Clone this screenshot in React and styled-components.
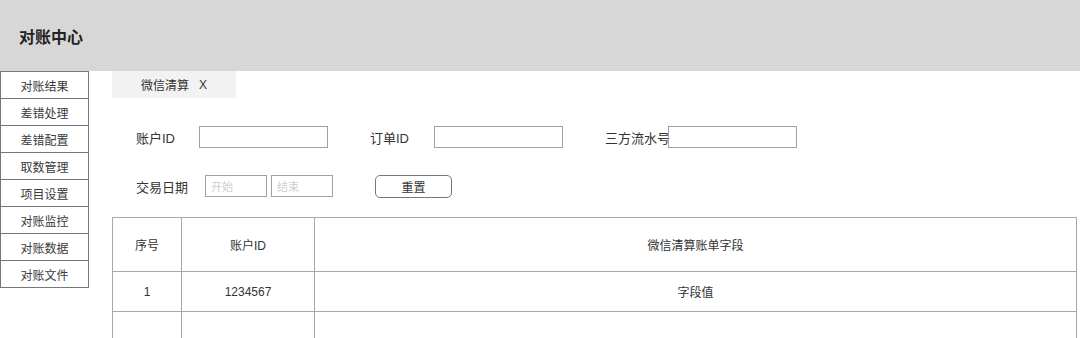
import React from 'react';
import styled, {createGlobalStyle} from 'styled-components';

const GlobalStyle = createGlobalStyle`
  body {
    margin: 0;
    background: #ffffff;
    font-family: "Liberation Sans", "Noto Sans CJK SC", sans-serif;
    color: #333333;
  }
`;

const Page = styled.div`
  width: 1080px;
  height: 338px;
  overflow: hidden;
`;

const Header = styled.div`
  height: 71px;
  background: #d7d7d7;
  display: flex;
  align-items: center;
  padding-left: 19px;
`;

const Title = styled.div`
  font-size: 16px;
  font-weight: 700;
  color: #222;
`;

const Body = styled.div`
  display: flex;
  align-items: flex-start;
`;

const SideMenu = styled.div`
  width: 87px;
  border: 1px solid #777;
  border-bottom: none;
  display: flex;
  flex-direction: column;
`;

const MenuItem = styled.div`
  height: 26px;
  border-bottom: 1px solid #777;
  display: flex;
  align-items: center;
  justify-content: center;
  font-size: 12px;
  color: #3a3a3a;
`;

const Main = styled.div`
  flex: 1;
  padding-left: 23px;
  padding-right: 3px;
`;

const TabBar = styled.div`
  display: flex;
  height: 27px;
`;

const Tab = styled.div`
  width: 124px;
  background: #f2f2f2;
  display: flex;
  align-items: center;
  justify-content: center;
  gap: 10px;
  font-size: 12px;
`;

const Form = styled.div`
  padding: 28px 0 0 24px;
  display: flex;
  flex-direction: column;
  gap: 27px;
`;

const Row = styled.div`
  display: flex;
  align-items: center;
  height: 22px;
`;

const Field = styled.div`
  display: flex;
  align-items: center;
  margin-right: 42px;
`;

const Label = styled.div`
  width: ${p => p.w || 63}px;
  font-size: 13px;
  color: #333;
  white-space: nowrap;
`;

const Input = styled.div`
  box-sizing: border-box;
  width: ${p => p.w || 129}px;
  height: 22px;
  border: 1px solid #a0a0a0;
  font-size: 11px;
  color: #cfcfcf;
  display: flex;
  align-items: center;
  padding-left: 5px;
  margin-right: ${p => p.mr || 0}px;
`;

const Button = styled.div`
  box-sizing: border-box;
  width: 77px;
  height: 23px;
  border: 1px solid #777;
  border-radius: 5px;
  display: flex;
  align-items: center;
  justify-content: center;
  font-size: 12px;
  color: #333;
`;

const Table = styled.div`
  margin-top: 20px;
  border: 1px solid #a8a8a8;
  border-bottom: none;
  display: grid;
  grid-template-columns: 69px 133px 1fr;
`;

const Cell = styled.div`
  height: ${p => p.h}px;
  box-sizing: border-box;
  border-bottom: 1px solid #a8a8a8;
  border-right: ${p => (p.last ? 'none' : '1px solid #a8a8a8')};
  display: flex;
  align-items: center;
  justify-content: center;
  font-size: 12px;
  color: #333;
`;

const menu = ['对账结果', '差错处理', '差错配置', '取数管理', '项目设置', '对账监控', '对账数据', '对账文件'];

const rows = [
  {h: 54, cells: ['序号', '账户ID', '微信清算账单字段']},
  {h: 40, cells: ['1', '1234567', '字段值']},
  {h: 40, cells: ['', '', '']},
];

export default function App() {
  return (
    <Page>
      <GlobalStyle/>
      <Header>
        <Title>对账中心</Title>
      </Header>
      <Body>
        <SideMenu>
          {menu.map(m => <MenuItem key={m}>{m}</MenuItem>)}
        </SideMenu>
        <Main>
          <TabBar>
            <Tab><span>微信清算</span><span>X</span></Tab>
          </TabBar>
          <Form>
            <Row>
              <Field><Label>账户ID</Label><Input/></Field>
              <Field><Label w={64}>订单ID</Label><Input/></Field>
              <Field><Label w={63}>三方流水号</Label><Input/></Field>
            </Row>
            <Row>
              <Field>
                <Label w={69}>交易日期</Label>
                <Input w={62} mr={4}>开始</Input>
                <Input w={62}>结束</Input>
              </Field>
              <Button>重置</Button>
            </Row>
          </Form>
          <Table>
            {rows.map((r, i) =>
              r.cells.map((c, j) => (
                <Cell key={i + '-' + j} h={r.h} last={j === 2}>{c}</Cell>
              ))
            )}
          </Table>
        </Main>
      </Body>
    </Page>
  );
}
